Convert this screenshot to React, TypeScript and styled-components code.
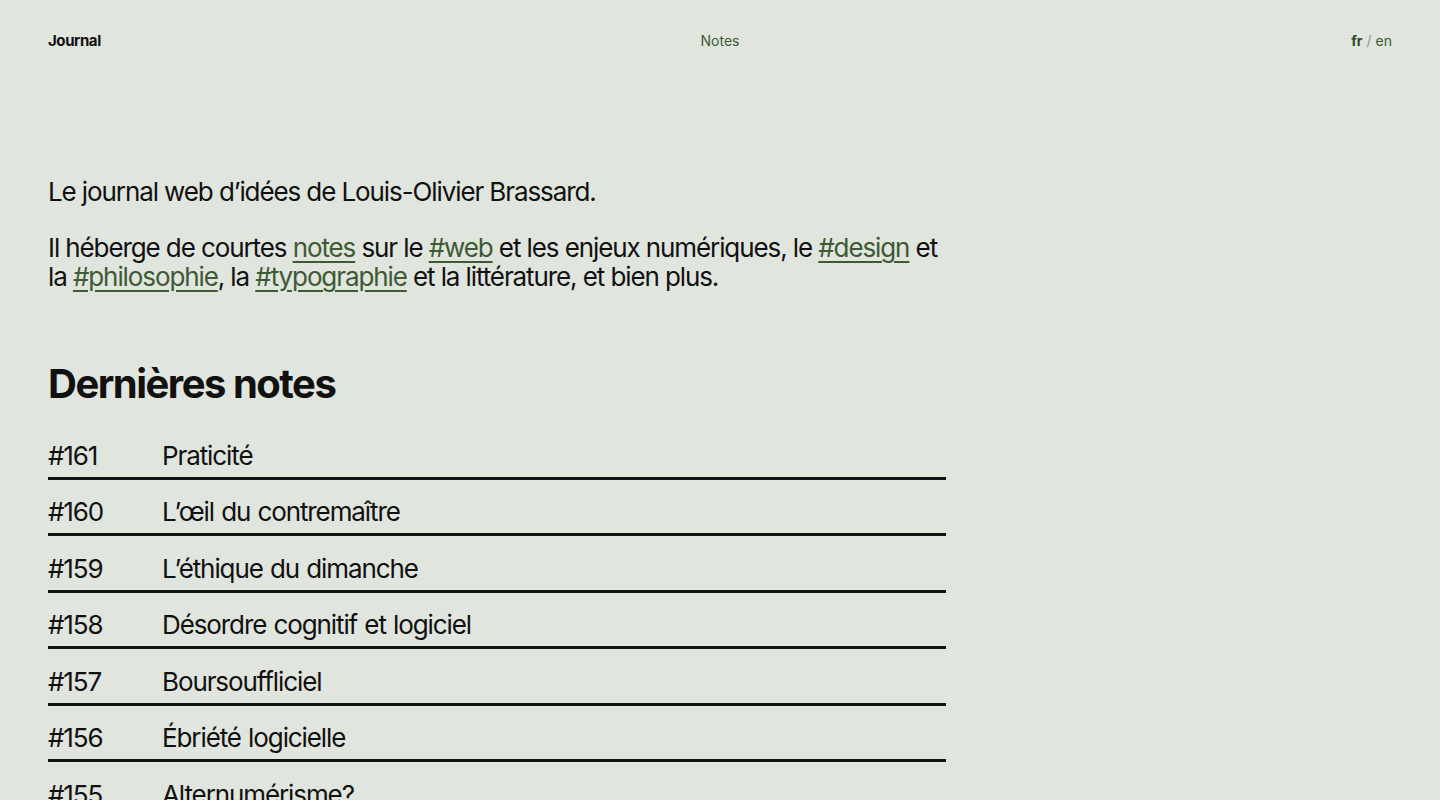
import styled, { createGlobalStyle } from 'styled-components';

const GlobalStyle = createGlobalStyle`
  html, body {
    margin: 0;
    padding: 0;
    background: #e0e5de;
    color: #111;
    font-family: Inter, "Liberation Sans", sans-serif;
  }
`;

const Page = styled.div`
  min-height: 800px;
  padding: 0 48px;
  box-sizing: border-box;
`;

const Header = styled.header`
  display: grid;
  grid-template-columns: 1fr auto 1fr;
  align-items: center;
  height: 80px;
  font-size: 14px;
`;

const Brand = styled.a`
  font-weight: 700;
  color: #111;
  text-decoration: none;
  font-size: 15px;
  letter-spacing: -0.4px;
`;

const NavLink = styled.a`
  color: #3d5a35;
  text-decoration: none;
`;

const Lang = styled.div`
  justify-self: end;
  color: #3d5a35;
  display: flex;
  gap: 4px;
`;

const LangItem = styled.span<{ $active?: boolean }>`
  font-weight: ${(p) => (p.$active ? 700 : 400)};
  color: ${(p) => (p.$active ? '#2f4a28' : '#3d5a35')};
`;

const Slash = styled.span`
  color: #8a9585;
`;

const Main = styled.main`
  width: 898px;
  padding-top: 97px;
`;

const Intro = styled.section`
  font-size: 26px;
  line-height: 29px;
  letter-spacing: -1.1px;

  p {
    margin: 0 0 27px;
  }
`;

const Tag = styled.a`
  color: #3d5a35;
  text-decoration: underline;
  text-decoration-thickness: 1.5px;
  text-underline-offset: 4px;
`;

const Heading = styled.h2`
  margin: 69px 0 15px;
  font-size: 40px;
  line-height: 48px;
  font-weight: 700;
  letter-spacing: -1.5px;
`;

const List = styled.ol`
  list-style: none;
  margin: 0;
  padding: 0;
`;

const Row = styled.li`
  display: grid;
  grid-template-columns: 114px 1fr;
  align-items: center;
  box-sizing: border-box;
  height: 56.5px;
  padding-top: 11px;
  border-bottom: 3px solid #111;
  font-size: 26px;
  letter-spacing: -1.1px;
  word-spacing: 1px;
`;

const notes = [
  ['#161', 'Praticité'],
  ['#160', 'L’œil du contremaître'],
  ['#159', 'L’éthique du dimanche'],
  ['#158', 'Désordre cognitif et logiciel'],
  ['#157', 'Boursouffliciel'],
  ['#156', 'Ébriété logicielle'],
  ['#155', 'Alternumérisme?'],
];

export default function App() {
  return (
    <>
      <GlobalStyle />
      <Page>
        <Header>
          <Brand href="#">Journal</Brand>
          <NavLink href="#">Notes</NavLink>
          <Lang>
            <LangItem $active>fr</LangItem>
            <Slash>/</Slash>
            <LangItem>en</LangItem>
          </Lang>
        </Header>
        <Main>
          <Intro>
            <p>Le journal web d’idées de Louis-Olivier Brassard.</p>
            <p>
              Il héberge de courtes <Tag href="#">notes</Tag> sur le <Tag href="#">#web</Tag> et les enjeux
              numériques, le <Tag href="#">#design</Tag> et la <Tag href="#">#philosophie</Tag>, la{' '}
              <Tag href="#">#typographie</Tag> et la littérature, et bien plus.
            </p>
          </Intro>
          <Heading>Dernières notes</Heading>
          <List>
            {notes.map(([num, title]) => (
              <Row key={num}>
                <span>{num}</span>
                <span>{title}</span>
              </Row>
            ))}
          </List>
        </Main>
      </Page>
    </>
  );
}
